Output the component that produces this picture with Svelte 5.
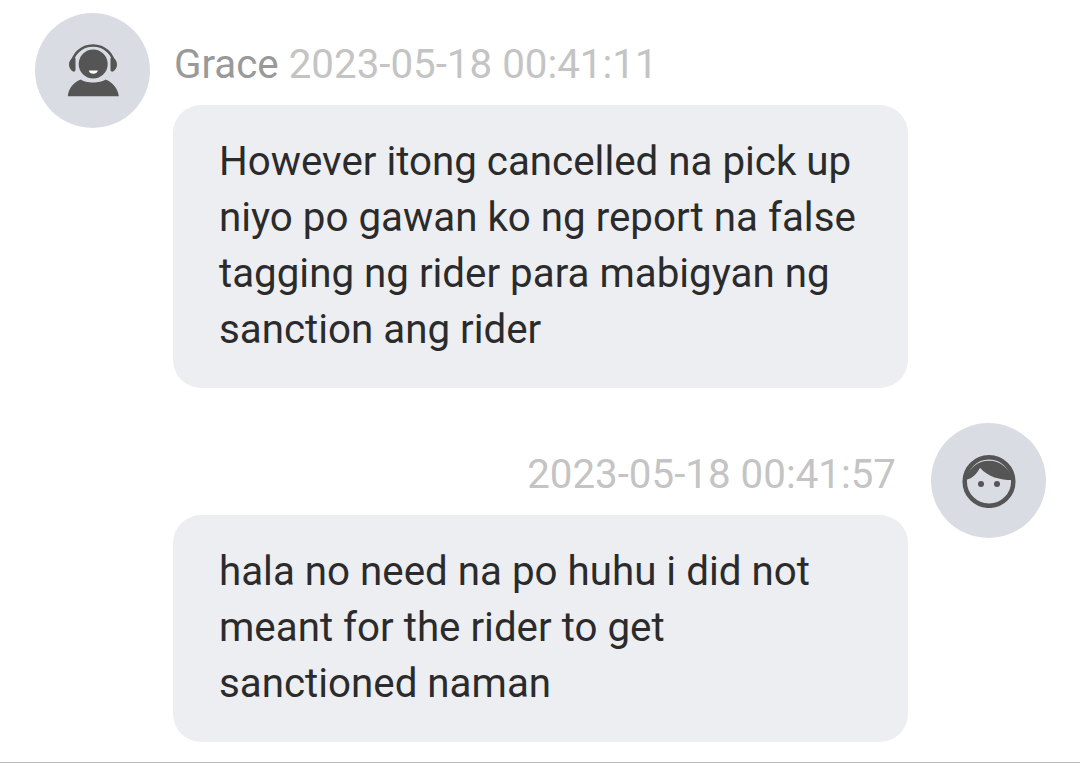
<script>
  const messages = [
    {
      name: 'Grace',
      time: '2023-05-18 00:41:11',
      text: ['However itong cancelled na pick up', 'niyo po gawan ko ng report na false', 'tagging ng rider para mabigyan ng', 'sanction ang rider'],
      mine: false
    },
    {
      name: '',
      time: '2023-05-18 00:41:57',
      text: ['hala no need na po huhu i did not', 'meant for the rider to get', 'sanctioned naman'],
      mine: true
    }
  ]
</script>

<div class="chat">
  {#each messages as msg}
    <div class="message" class:mine={msg.mine}>
      <div class="avatar">
        {#if msg.mine}
          <svg width="54" height="54" viewBox="0 0 54 54">
            <circle cx="27" cy="27.500" r="24.300" fill="none" stroke="#555" stroke-width="4.500" />
            <path d="M3.500 26A24 24 0 0 1 50.500 26C38 26 26 23 18 13.700C15 20 10 24.500 3.500 26z" fill="#555" />
            <circle cx="19" cy="30" r="3" fill="#555" />
            <circle cx="35" cy="30" r="3" fill="#555" />
          </svg>
        {:else}
          <svg width="54" height="54" viewBox="0 0 54 54">
            <path d="M6 21A21 19.500 0 0 1 48 21" fill="none" stroke="#555" stroke-width="2.500" />
            <path d="M7 13.500C4.500 15 3 17.500 3 20.500S4.500 26 7 27.500C8.500 28 9.500 27 9.500 26V15C9.500 14 8.500 13 7 13.500zM47 13.500C49.500 15 51 17.500 51 20.500S49.500 26 47 27.500C45.500 28 44.500 27 44.500 26V15C44.500 14 45.500 13 47 13.500z" fill="#555" />
            <circle cx="27.200" cy="20" r="14.500" fill="#555" />
            <path d="M22.800 26.500h9c-.5 2.200-2.300 3.300-4.500 3.300s-4-1.100-4.500-3.300z" fill="#fff" />
            <path d="M1.800 52.200C2.500 44 8 38 15 35.500C19 39.500 35 39.500 39.500 35.500C46 38 52 44 52.800 52.200z" fill="#555" />
          </svg>
        {/if}
      </div>
      <div class="body">
        <div class="meta">
          {#if msg.name}<span class="name">{msg.name}</span>{/if}
          <span class="time">{msg.time}</span>
        </div>
        <div class="bubble">
          {#each msg.text as line}
            <div>{line}</div>
          {/each}
        </div>
      </div>
    </div>
  {/each}
</div>

<style>
  :global(body) {
    background: #fff;
  }

  .chat {
    height: 763px;
    box-sizing: border-box;
    border-bottom: 1px solid #bdbdbd;
    padding: 13px 34px 0 35px;
    display: flex;
    flex-direction: column;
    gap: 35px;
    font-family: Roboto, sans-serif;
    overflow: hidden;
  }

  .message {
    display: flex;
    gap: 23px;
  }

  .message.mine {
    flex-direction: row-reverse;
  }

  .avatar {
    width: 115px;
    height: 115px;
    flex: none;
    border-radius: 50%;
    background: #d9dce3;
    display: flex;
    align-items: center;
    justify-content: center;
  }

  .body {
    width: 735px;
  }

  .meta {
    height: 92px;
    font-size: 40.3px;
    line-height: 104px;
    white-space: nowrap;
    padding-left: 1px;
  }

  .mine .meta {
    text-align: right;
    padding-right: 12px;
  }

  .name {
    color: #999;
  }

  .time {
    color: #c4c4c4;
  }

  .bubble {
    background: #edeef2;
    border-radius: 28px;
    padding: 29px 46px 30px;
    font-size: 40.3px;
    line-height: 56px;
    color: #2b2b2b;
    white-space: nowrap;
  }
</style>
